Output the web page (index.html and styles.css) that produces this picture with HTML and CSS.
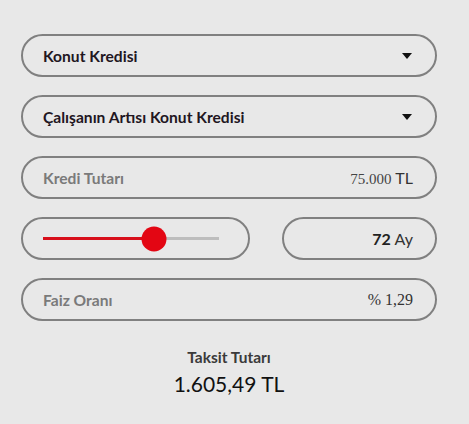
FILE: index.html
```html
<!DOCTYPE html>
<html lang="tr">
<head>
<meta charset="utf-8">
<link rel="stylesheet" href="styles.css">
</head>
<body>
<div class="calc">
  <div class="pill select">
    <span class="label dark">Konut Kredisi</span>
    <span class="caret"></span>
  </div>
  <div class="pill select">
    <span class="label dark">Çalışanın Artısı Konut Kredisi</span>
    <span class="caret"></span>
  </div>
  <div class="pill field">
    <span class="label gray">Kredi Tutarı</span>
    <span class="value"><span class="num">75.000</span> <span class="unit">TL</span></span>
  </div>
  <div class="row">
    <div class="pill slider-pill">
      <div class="track">
        <div class="fill" style="width:63%"></div>
        <div class="thumb" style="left:63%"></div>
      </div>
    </div>
    <div class="pill months">
      <span class="value"><b>72</b> <span class="unit">Ay</span></span>
    </div>
  </div>
  <div class="pill field">
    <span class="label gray">Faiz Oranı</span>
    <span class="value"><span class="num rate">% 1,29</span></span>
  </div>
  <div class="result">
    <div class="result-label">Taksit Tutarı</div>
    <div class="result-value">1.605,49 TL</div>
  </div>
</div>
</body>
</html>
```
FILE: styles.css
```css
html, body {
  margin: 0;
  background: #e8e8e8;
}
body {
  font-family: Lato, "Open Sans", sans-serif;
}
.calc {
  width: 416px;
  padding: 34px 0 0 21px;
  display: flex;
  flex-direction: column;
  gap: 18px;
}
.pill {
  box-sizing: border-box;
  height: 43px;
  border: 2px solid #808080;
  border-radius: 22px;
  display: flex;
  align-items: center;
  justify-content: space-between;
  padding: 0 20px;
}
.label {
  font-size: 15.6px;
  font-weight: 700;
}
.dark { color: #22161f; }
.gray { color: #7a7a7a; }
.caret {
  width: 0;
  height: 0;
  border-left: 5px solid transparent;
  border-right: 5px solid transparent;
  border-top: 6px solid #111;
  margin-right: 3px;
}
.value {
  color: #333;
  font-size: 15px;
  margin-right: 2px;
}
.num {
  font-family: "Liberation Serif", serif;
  font-size: 15px;
  color: #444;
}
.rate {
  font-size: 16px;
  color: #333;
}
.unit {
  font-size: 16px;
  color: #333;
}
.value b {
  font-weight: 700;
  color: #222;
  font-size: 16px;
}
.row {
  display: flex;
  gap: 32px;
}
.slider-pill {
  width: 229px;
}
.months {
  flex: 1;
  justify-content: flex-end;
}
.track {
  position: relative;
  width: 176px;
  height: 3px;
  background: #bdbdbd;
}
.fill {
  height: 3px;
  background: #d70f1b;
}
.thumb {
  position: absolute;
  top: 50%;
  width: 25px;
  height: 25px;
  border-radius: 50%;
  background: #e30613;
  transform: translate(-50%, -50%);
}
.result {
  text-align: center;
  padding-top: 9px;
}
.result-label {
  font-size: 15.5px;
  font-weight: 700;
  color: #3a3a3a;
}
.result-value {
  font-size: 21px;
  color: #111;
  margin-top: 5px;
}
```
